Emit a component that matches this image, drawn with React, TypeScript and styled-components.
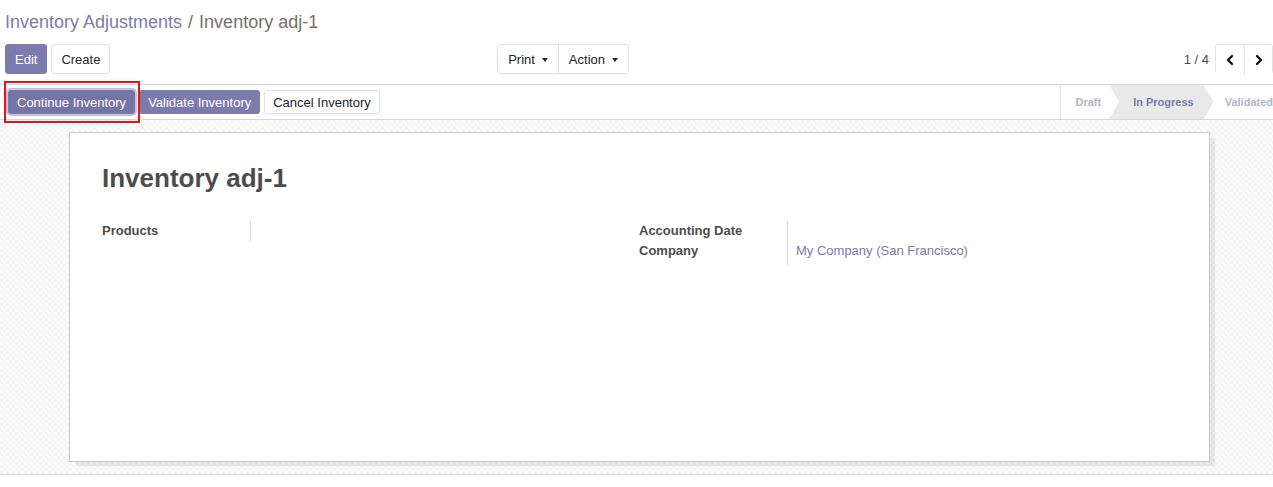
import * as React from 'react';
import styled, { createGlobalStyle } from 'styled-components';
import { ChevronLeft, ChevronRight } from 'lucide-react';

const GlobalStyle = createGlobalStyle`
  html, body {
    margin: 0;
    padding: 0;
    background: #ffffff;
  }
  body {
    font-family: 'Liberation Sans', Arial, sans-serif;
    font-size: 13px;
    color: #4c4c4c;
  }
  * {
    box-sizing: border-box;
  }
`;

const Page = styled.div`
  width: 1273px;
  height: 487px;
  display: flex;
  flex-direction: column;
  overflow: hidden;
`;

const ControlPanel = styled.div`
  padding: 10px 0 10px 5px;
  border-bottom: 1px solid #d6d6d6;
`;

const Breadcrumb = styled.div`
  font-size: 18px;
  line-height: 24px;
  height: 24px;
  color: #7a6e68;
  white-space: nowrap;
`;

const Crumb = styled.span`
  color: #7c7bad;
`;

const Sep = styled.span`
  margin: 0 6px;
  color: #7a6e68;
`;

const CpRow = styled.div`
  display: grid;
  grid-template-columns: 624px 1fr;
  margin-top: 10px;
  height: 30px;
`;

const CpLeft = styled.div`
  display: flex;
  justify-content: space-between;
`;

const CpRight = styled.div`
  display: flex;
  justify-content: flex-end;
  align-items: center;
`;

const BtnRow = styled.div`
  display: flex;
  gap: 4px;
`;

const Button = styled.button<{ $primary?: boolean; $small?: boolean }>`
  height: ${(p) => (p.$small ? 24 : 30)}px;
  padding: 0 ${(p) => (p.$small ? 8 : 9)}px;
  font-family: inherit;
  font-size: 13px;
  border-radius: 3px;
  border: 1px solid ${(p) => (p.$primary ? '#7c7bad' : '#dee2e6')};
  background: ${(p) => (p.$primary ? '#7c7bad' : '#ffffff')};
  color: ${(p) => (p.$primary ? '#ffffff' : '#212529')};
  cursor: pointer;
  white-space: nowrap;
`;

const Group = styled.div`
  display: flex;
  border: 1px solid #dee2e6;
  border-radius: 3px;
  height: 30px;
`;

const GroupItem = styled.button`
  display: flex;
  align-items: center;
  gap: 7px;
  padding: 0 10px;
  background: #fff;
  border: none;
  font-family: inherit;
  font-size: 13px;
  color: #212529;
  & + & {
    border-left: 1px solid #dee2e6;
  }
`;

const Caret = styled.span`
  width: 0;
  height: 0;
  border-left: 3px solid transparent;
  border-right: 3px solid transparent;
  border-top: 4px solid #212529;
  margin-top: 1px;
`;

const PagerValue = styled.span`
  font-size: 13px;
  color: #4c4c4c;
  margin-right: 6px;
`;

const PagerItem = styled.button`
  width: 28px;
  height: 30px;
  display: flex;
  align-items: center;
  justify-content: center;
  background: #fff;
  border: none;
  padding: 0;
  color: #111;
  & + & {
    border-left: 1px solid #dee2e6;
  }
`;

const StatusBar = styled.div`
  display: flex;
  justify-content: space-between;
  align-items: stretch;
  height: 35px;
  border-bottom: 1px solid #d6d6d6;
`;

const StatusButtons = styled.div`
  display: flex;
  align-items: center;
  gap: 4px;
  padding-left: 8px;
`;

const Highlight = styled.span`
  position: relative;
  display: inline-flex;
  &::after {
    content: '';
    position: absolute;
    left: -4px;
    right: -5px;
    top: -9px;
    bottom: -9px;
    border: 2px solid #e8101a;
    pointer-events: none;
  }
`;

const FocusButton = styled(Button)`
  box-shadow: 0 0 0 2px #c4c3d6;
  background: #7574a6;
`;

const Steps = styled.div`
  display: flex;
  align-items: stretch;
  border-left: 1px solid #e2e2e2;
`;

const Step = styled.div<{ $active?: boolean }>`
  display: flex;
  align-items: center;
  height: 100%;
  font-size: 11px;
  font-weight: bold;
  color: ${(p) => (p.$active ? '#7c7bad' : '#b3b3c9')};
  background: ${(p) => (p.$active ? '#e9e9e9' : 'transparent')};
  padding: ${(p) => (p.$active ? '0 20px 0 24px' : '0 0 0 15px')};
  clip-path: ${(p) =>
    p.$active
      ? 'polygon(0 0, calc(100% - 10px) 0, 100% 50%, calc(100% - 10px) 100%, 0 100%, 10px 50%)'
      : 'none'};
  white-space: nowrap;
  &:first-child {
    padding-right: 8px;
  }
  &:last-child {
    padding-left: 11px;
  }
`;

const Content = styled.div`
  flex: 0 0 355px;
  padding: 12px 0 0 69px;
  border-bottom: 1px solid #d6d6d6;
  background-color: #ffffff;
  background-image: repeating-conic-gradient(#f3f3f3 0 25%, #ffffff 0 50%);
  background-size: 6px 6px;
`;

const Sheet = styled.div`
  width: 1141px;
  height: 330px;
  background: #ffffff;
  border: 1px solid #c9c9d2;
  box-shadow: 6px 5px 0 -1px rgba(0, 0, 0, 0.08);
  padding: 28px 32px;
`;

const Title = styled.h1`
  margin: 0;
  font-size: 26px;
  line-height: 34px;
  font-weight: bold;
  color: #4c4c4c;
`;

const Groups = styled.div`
  display: grid;
  grid-template-columns: 537px 1fr;
  margin-top: 26px;
`;

const FieldGrid = styled.div`
  display: grid;
  grid-template-columns: 149px 1fr;
  align-content: start;
`;

const Label = styled.div<{ $last?: boolean }>`
  font-weight: bold;
  font-size: 13px;
  line-height: 20px;
  color: #4c4c4c;
  border-right: 1px solid #d6d6d6;
  padding-right: 8px;
  padding-bottom: ${(p) => (p.$last ? 4 : 0)}px;
`;

const Value = styled.div`
  font-size: 13px;
  line-height: 20px;
  padding-left: 8px;
  color: #7c7bad;
`;

export default function App() {
  return (
    <>
      <GlobalStyle />
      <Page>
        <ControlPanel>
          <Breadcrumb>
            <Crumb>Inventory Adjustments</Crumb>
            <Sep>/</Sep>
            Inventory adj-1
          </Breadcrumb>
          <CpRow>
            <CpLeft>
              <BtnRow>
                <Button $primary>Edit</Button>
                <Button>Create</Button>
              </BtnRow>
              <Group>
                <GroupItem>
                  Print <Caret />
                </GroupItem>
                <GroupItem>
                  Action <Caret />
                </GroupItem>
              </Group>
            </CpLeft>
            <CpRight>
              <PagerValue>1 / 4</PagerValue>
              <Group>
                <PagerItem>
                  <ChevronLeft size={16} strokeWidth={3.5} />
                </PagerItem>
                <PagerItem>
                  <ChevronRight size={16} strokeWidth={3.5} />
                </PagerItem>
              </Group>
            </CpRight>
          </CpRow>
        </ControlPanel>
        <StatusBar>
          <StatusButtons>
            <Highlight>
              <FocusButton $primary $small>
                Continue Inventory
              </FocusButton>
            </Highlight>
            <Button $primary $small>
              Validate Inventory
            </Button>
            <Button $small>Cancel Inventory</Button>
          </StatusButtons>
          <Steps>
            <Step>Draft</Step>
            <Step $active>In Progress</Step>
            <Step>Validated</Step>
          </Steps>
        </StatusBar>
        <Content>
          <Sheet>
            <Title>Inventory adj-1</Title>
            <Groups>
              <FieldGrid>
                <Label>Products</Label>
                <Value />
              </FieldGrid>
              <FieldGrid>
                <Label>Accounting Date</Label>
                <Value />
                <Label $last>Company</Label>
                <Value>My Company (San Francisco)</Value>
              </FieldGrid>
            </Groups>
          </Sheet>
        </Content>
      </Page>
    </>
  );
}
